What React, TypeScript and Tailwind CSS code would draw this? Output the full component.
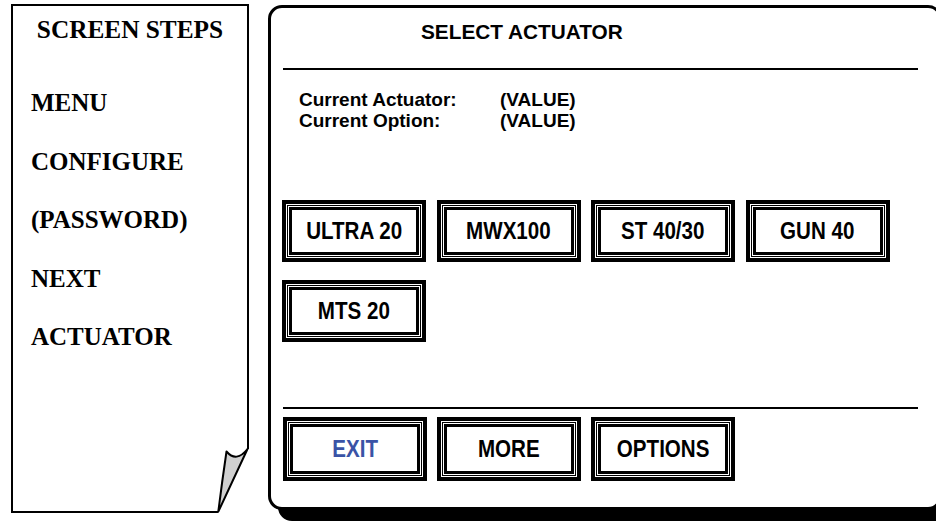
import React from "react";

const serif = { fontFamily: '"Liberation Serif", "Times New Roman", serif' };
const sans = { fontFamily: '"Liberation Sans", Arial, sans-serif' };

function Btn({ label, blue, h }: { label: string; blue?: boolean; h: string }) {
  return (
    <div className={`w-[144px] ${h} shrink-0 border-4 border-black bg-white p-px flex`}>
      <div className="flex-1 border border-black p-px flex">
        <div className="flex-1 border-[3px] border-black flex items-center justify-center">
          <span
            className={`inline-block scale-x-[0.84] text-[24.5px] font-bold leading-none ${blue ? "text-[#3a53a6]" : "text-black"}`}
          >
            {label}
          </span>
        </div>
      </div>
    </div>
  );
}

export default function App() {
  const items = ["MENU", "CONFIGURE", "(PASSWORD)", "NEXT", "ACTUATOR"];
  return (
    <div className="relative w-[936px] h-[521px] bg-white overflow-hidden flex items-start">
      {/* Sidebar */}
      <div
        className="relative shrink-0 ml-[11px] mt-[4px] w-[238px] h-[509px] border-2 border-black flex flex-col text-black"
        style={serif}
      >
        <div className="pt-[8px] text-center text-[25.3px] font-bold leading-[30px]">SCREEN STEPS</div>
        <div className="mt-[30px] flex flex-col pl-[18px]">
          {items.map((t) => (
            <div key={t} className="h-[58.5px] leading-[58.5px] text-[25px] font-bold">
              {t}
            </div>
          ))}
        </div>
        <svg
          className="absolute left-[187px] top-[434px] w-[60px] h-[80px] overflow-visible"
          viewBox="200 440 60 80"
        >
          <path d="M218.3 511.7 L247.5 449 L262 449 L262 520 L215 520 Z" fill="#fff" />
          <path
            d="M226.5 451.5 Q236.5 463 247.5 449 L218.3 511.7 Q222 482 226.5 451.5 Z"
            fill="#d0d0d0"
            stroke="#000"
            strokeWidth="2"
            strokeLinejoin="round"
          />
        </svg>
      </div>

      {/* Main panel */}
      <div
        className="ml-[19px] mt-[5px] w-[674px] h-[505px] shrink-0 border-[3px] border-black rounded-[14px] bg-white shadow-[10px_11px_0_0_#000] flex flex-col text-black"
        style={sans}
      >
        <div className="h-[48px] leading-[48px] pl-[150px] text-[20.8px] font-bold">SELECT ACTUATOR</div>
        <div className="mt-[12px] ml-[12px] w-[635px] h-[2px] bg-black" />
        <div className="mt-[19px] pl-[28px] text-[19px] font-bold leading-[21px]">
          <div className="flex">
            <span className="w-[201px]">Current Actuator:</span>
            <span>(VALUE)</span>
          </div>
          <div className="flex">
            <span className="w-[201px]">Current Option:</span>
            <span>(VALUE)</span>
          </div>
        </div>
        <div className="mt-[69px] pl-[11px] flex flex-col gap-[18px]">
          <div className="flex gap-[10.5px]">
            <Btn label="ULTRA 20" h="h-[62px]" />
            <Btn label="MWX100" h="h-[62px]" />
            <Btn label="ST 40/30" h="h-[62px]" />
            <Btn label="GUN 40" h="h-[62px]" />
          </div>
          <div className="flex gap-[10.5px]">
            <Btn label="MTS 20" h="h-[62px]" />
          </div>
        </div>
        <div className="mt-[65px] ml-[12px] w-[635px] h-[2px] bg-black" />
        <div className="mt-[8px] pl-[12px] flex gap-[10px]">
          <Btn label="EXIT" blue h="h-[64px]" />
          <Btn label="MORE" h="h-[64px]" />
          <Btn label="OPTIONS" h="h-[64px]" />
        </div>
      </div>
    </div>
  );
}
